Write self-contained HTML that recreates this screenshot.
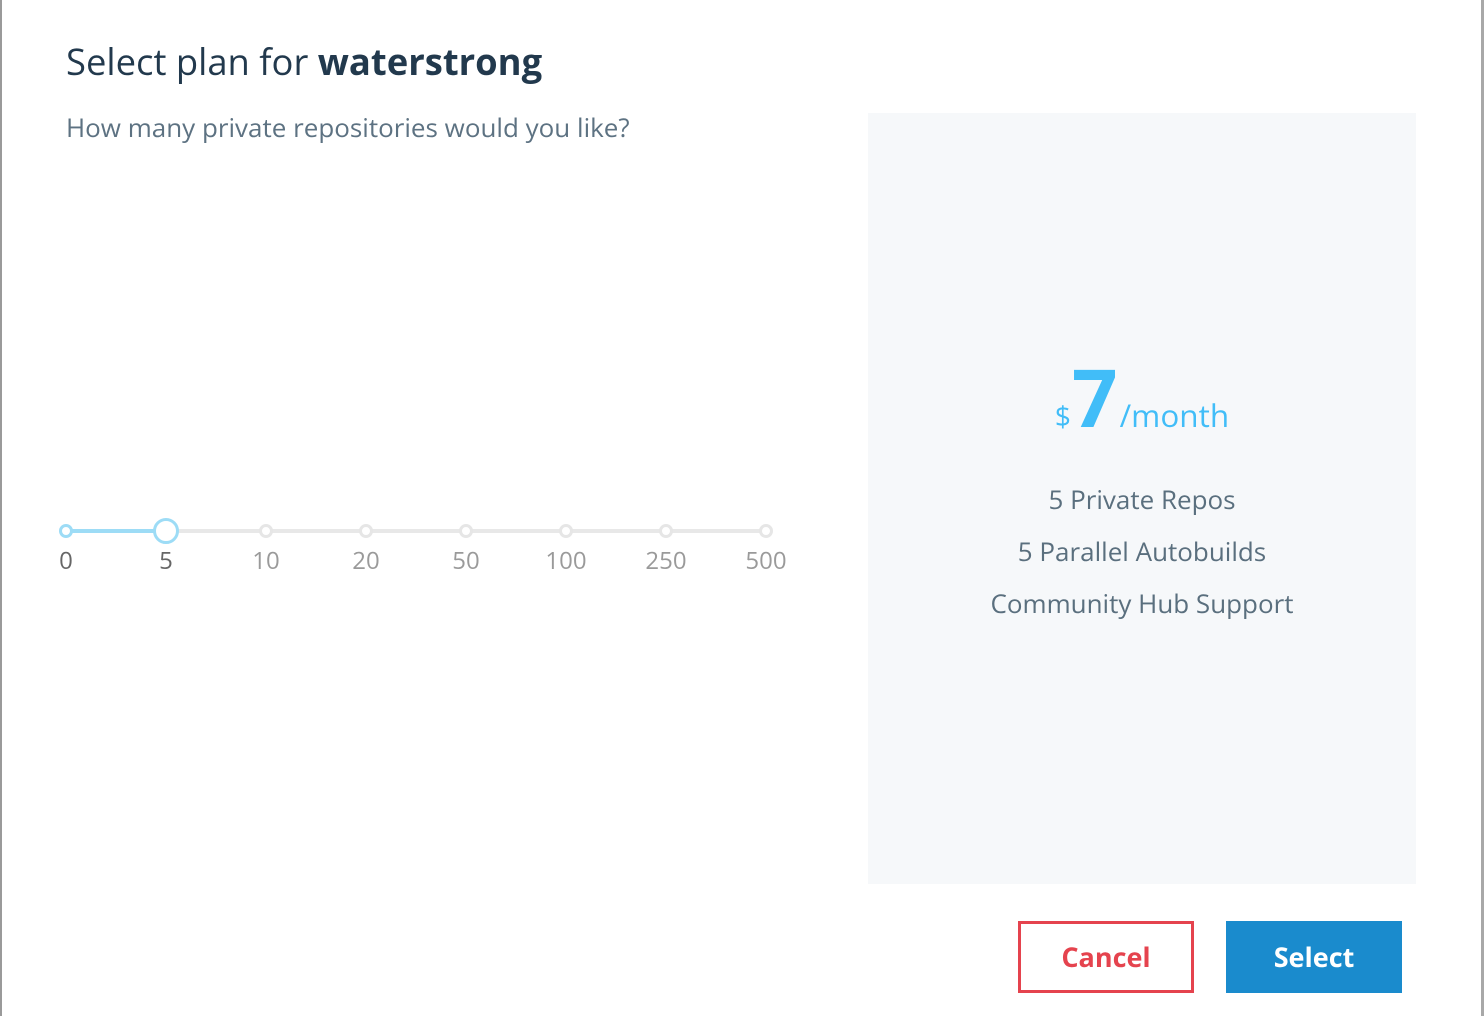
<!DOCTYPE html>
<html><head><style>
html,body{margin:0;padding:0;}
body{width:1484px;height:1016px;position:relative;background:#fff;font-family:"Open Sans","Liberation Sans",sans-serif;overflow:hidden;}
.bl{position:absolute;left:0;top:0;width:2px;height:1016px;background:#9a9a9a;}
.br{position:absolute;left:1481px;top:0;width:3px;height:1016px;background:#a8a8a8;}
h1{position:absolute;left:66px;top:37px;margin:0;font-size:36.4px;font-weight:normal;color:#22394d;line-height:48px;}
h1 b{font-weight:bold;}
.q{position:absolute;left:66px;top:110px;font-size:26px;color:#5d7282;line-height:34px;}
.track{position:absolute;left:66px;top:529px;width:700px;height:4px;background:#e8e8e8;}
.fill{position:absolute;left:66px;top:529px;width:100px;height:4px;background:#9ddcf6;}
.dot{position:absolute;width:8px;height:8px;border:3px solid #e6e6e6;background:#fff;border-radius:50%;top:524px;}
.lab{position:absolute;top:545px;width:60px;text-align:center;font-size:24px;color:#9a9a9a;line-height:32px;}
.panel{position:absolute;left:868px;top:113px;width:548px;height:771px;background:#f6f8fa;}
.price{position:absolute;left:868px;width:548px;top:357px;text-align:center;color:#41bdf8;white-space:nowrap;}
.f{position:absolute;left:868px;width:548px;text-align:center;font-size:26px;color:#5a6f7e;line-height:34px;}
.btn{position:absolute;top:921px;height:72px;width:176px;box-sizing:border-box;font-size:27px;font-weight:bold;text-align:center;line-height:70px;}
</style></head><body>
<div class="bl"></div><div class="br"></div>
<h1>Select plan for <b>waterstrong</b></h1>
<div class="q">How many private repositories would you like?</div>
<div class="track"></div><div class="fill"></div>
<div class="dot" style="left:59px;border-color:#9ddcf6;"></div>
<div class="dot" style="left:259px"></div>
<div class="dot" style="left:359px"></div>
<div class="dot" style="left:459px"></div>
<div class="dot" style="left:559px"></div>
<div class="dot" style="left:659px"></div>
<div class="dot" style="left:759px"></div>
<div class="dot" style="left:153px;top:518px;width:20px;height:20px;border-color:#9ddcf6;"></div>
<div class="lab" style="left:36px;color:#666">0</div>
<div class="lab" style="left:136px;color:#666">5</div>
<div class="lab" style="left:236px">10</div>
<div class="lab" style="left:336px">20</div>
<div class="lab" style="left:436px">50</div>
<div class="lab" style="left:536px">100</div>
<div class="lab" style="left:636px">250</div>
<div class="lab" style="left:736px">500</div>
<div class="panel"></div>
<div class="price"><span style="font-size:28px">$</span><span style="font-size:80px;font-weight:bold;line-height:80px;margin:0 2px 0 1px">7</span><span style="font-size:31.5px">/month</span></div>
<div class="f" style="top:482px">5 Private Repos</div>
<div class="f" style="top:534px">5 Parallel Autobuilds</div>
<div class="f" style="top:586px">Community Hub Support</div>
<div class="btn" style="left:1018px;border:3px solid #e5434e;color:#e5434e;line-height:66px;">Cancel</div>
<div class="btn" style="left:1226px;background:#1a8bcd;color:#fff;line-height:72px;">Select</div>
</body></html>
